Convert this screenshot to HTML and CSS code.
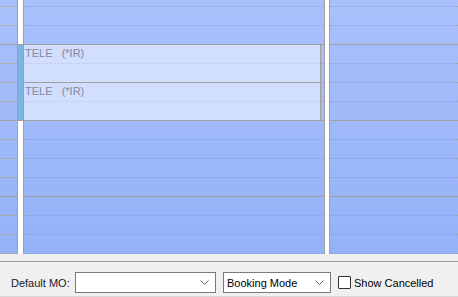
FILE: index.html
```html
<!DOCTYPE html>
<html lang="en">
<head>
  <meta charset="UTF-8">
  <title>Schedule</title>
  <link rel="stylesheet" href="styles.css">
</head>
<body>
  <div id="schedule" class="schedule">
    <div class="col col-a"><div class="slots"></div></div>
    <div class="col-gap gap-a"></div>
    <div class="col col-b"><div class="slots"></div></div>
    <div class="col-gap gap-b"></div>
    <div class="col col-c"><div class="slots"></div></div>

    <div class="event">
      <div class="event-strip"></div>
      <div class="event-body">
        <div class="event-item">
          <div class="event-slot"><span class="event-text">TELE   (*IR)</span></div>
          <div class="event-slot"></div>
        </div>
        <div class="event-item">
          <div class="event-slot"><span class="event-text">TELE   (*IR)</span></div>
          <div class="event-slot"></div>
        </div>
      </div>
    </div>
  </div>

  <div class="splitter"></div>

  <div class="toolbar">
    <label class="tb-label">Default MO:</label>
    <div class="combo combo-mo">
      <span class="combo-text"></span>
      <svg class="chevron" width="9" height="5" viewBox="0 0 9 5"><polyline points="0.5,0.5 4.5,4.5 8.5,0.5" fill="none" stroke="#606060" stroke-width="1"/></svg>
    </div>
    <div class="combo combo-mode">
      <span class="combo-text">Booking Mode</span>
      <svg class="chevron" width="9" height="5" viewBox="0 0 9 5"><polyline points="0.5,0.5 4.5,4.5 8.5,0.5" fill="none" stroke="#606060" stroke-width="1"/></svg>
    </div>
    <span class="checkbox"></span>
    <span class="check-label">Show Cancelled</span>
  </div>

  <script>
    // fill each column with time slots; every 4th line is the hour line
    document.querySelectorAll('.slots').forEach(function(slots) {
      for (let i = 0; i < 14; i++) {
        const slot = document.createElement('div');
        slot.className = 'slot';
        if (i === 0) slot.classList.add('slot-first');
        if (i % 4 === 2) slot.classList.add('slot-hour');
        slots.appendChild(slot);
      }
    });
  </script>
</body>
</html>
```

FILE: styles.css
```css
body {
  margin: 0;
  width: 458px;
  height: 297px;
  overflow: hidden;
  background: #f0f0f0;
  font-family: "Liberation Sans", Arial, sans-serif;
  font-size: 11px;
  color: #000;
}

.schedule {
  position: relative;
  display: flex;
  height: 254px;
  overflow: hidden;
}

.col {
  height: 254px;
  background: linear-gradient(to bottom, #a9c1fb, #95b2f8);
  overflow: hidden;
}

.col-a {
  width: 17px;
  border-right: 1px solid #a0a0a0;
}

.col-b {
  width: 300px;
  border-left: 1px solid #a0a0a0;
  border-right: 1px solid #a0a0a0;
}

.col-c {
  flex: 1;
  border-left: 1px solid #a0a0a0;
}

.col-gap {
  background: #fff;
}

.gap-a {
  width: 5px;
}

.gap-b {
  width: 4px;
}

.slot {
  box-sizing: border-box;
  height: 19px;
  border-bottom: 1px dotted #a0a0a0;
}

.slot-first {
  height: 7px;
}

.slot-hour {
  border-bottom-style: solid;
}

.event {
  position: absolute;
  top: 44px;
  left: 18px;
  width: 303px;
  display: flex;
}

.event-strip {
  width: 5px;
  background: #7cb5e4;
  border-top: 1px solid #a0a0a0;
  border-bottom: 1px solid #a0a0a0;
}

.event-body {
  flex: 1;
  border-left: 1px solid #a0a0a0;
  border-right: 1px solid #a0a0a0;
  border-bottom: 1px solid #a0a0a0;
}

.event-item {
  border-top: 1px solid #a0a0a0;
  background: #d1defd;
}

.event-slot {
  box-sizing: border-box;
  height: 19px;
  border-bottom: 1px dotted #c4cbdb;
}

.event-slot:last-child {
  height: 18px;
  border-bottom: none;
}

.event-text {
  display: block;
  padding: 2px 0 0 1px;
  white-space: pre;
  line-height: 13px;
  color: #85869c;
}

.splitter {
  height: 7px;
}

.toolbar {
  box-sizing: border-box;
  display: flex;
  align-items: center;
  height: 36px;
  padding: 10px 0 3px 11px;
  border-top: 1px solid #a0a0a0;
  border-bottom: 1px solid #d8d8d8;
}

.tb-label {
  width: 64px;
  color: #1a1a2a;
}

.combo {
  box-sizing: border-box;
  display: flex;
  align-items: center;
  height: 21px;
  background: #fff;
  border: 1px solid #7a7a7a;
  padding: 0 6px 0 3px;
}

.combo-mo {
  width: 141px;
}

.combo-mode {
  width: 108px;
  margin-left: 7px;
}

.combo-text {
  flex: 1;
}

.chevron {
  display: block;
}

.checkbox {
  box-sizing: border-box;
  width: 13px;
  height: 13px;
  margin-left: 7px;
  background: #fff;
  border: 1px solid #333;
  border-radius: 1px;
}

.check-label {
  margin-left: 3px;
}
```
